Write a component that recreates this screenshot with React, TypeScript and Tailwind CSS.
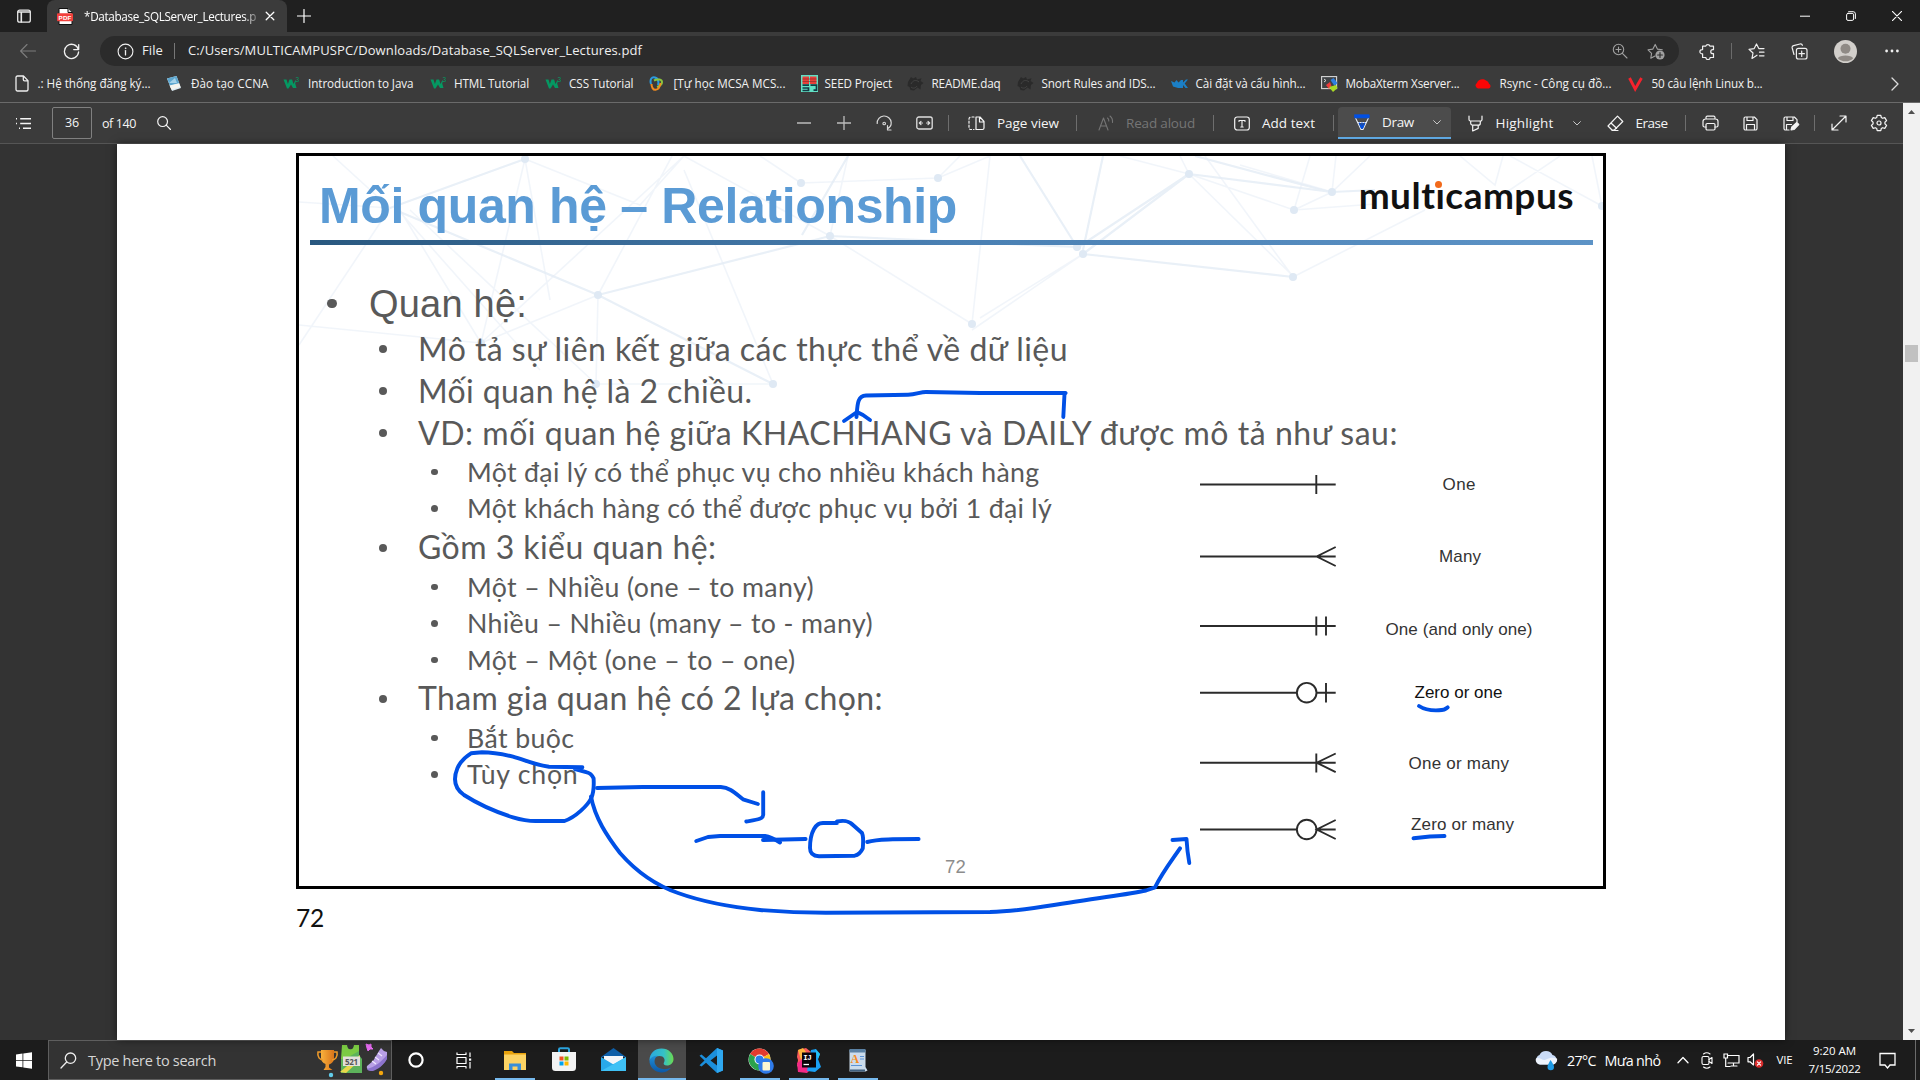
import React, { useLayoutEffect, useRef, useState } from "react";

/** Text whose tracking is adjusted so that it takes up exactly `w` pixels. */
function Fit({ w, children, className = "" }: { w: number; children: string; className?: string }) {
  const ref = useRef<HTMLSpanElement>(null);
  const [spacing, setSpacing] = useState(0);
  useLayoutEffect(() => {
    if (ref.current) {
      const natural = ref.current.getBoundingClientRect().width;
      setSpacing((w - natural) / Array.from(children).length);
    }
  }, []);
  return (
    <span ref={ref} className={"inline-block whitespace-pre " + className} style={{ letterSpacing: spacing }}>
      {children}
    </span>
  );
}

function Svg({ w = 16, h = 16, className = "", children, box }: { w?: number; h?: number; className?: string; children: React.ReactNode; box?: string }) {
  return (
    <svg width={w} height={h} viewBox={box ?? `0 0 ${w} ${h}`} fill="none" stroke="currentColor" strokeWidth="1.1" strokeLinecap="round" strokeLinejoin="round" className={"block shrink-0 " + className}>
      {children}
    </svg>
  );
}

/* ---------- Tab strip ---------- */

function TabStrip() {
  return (
    <div className="flex h-8 items-center bg-[#202020] text-white">
      <Svg className="ml-4 text-[#e8e8e8]">
        <rect x="1.7" y="2.2" width="12.6" height="12" rx="2" strokeWidth="1.3" />
        <path d="M2 4h12M5.3 4v10" strokeWidth="1.6" />
      </Svg>
      <div className="ml-[15px] flex h-8 w-[240px] items-center rounded-t-lg bg-[#3b3b3b]">
        <svg width="17" height="17" viewBox="0 0 17 17" className="ml-[10px] block shrink-0">
          <path d="M2 .5h9l4 4v12H2z" fill="#fff" stroke="#111" />
          <path d="M11 .5v4h4" fill="#ddd" stroke="#111" />
          <rect x="0" y="5.2" width="16" height="8" rx="1" fill="#f2403c" />
          <text x="1.6" y="11.6" fontSize="6.2" fontWeight="700" fontFamily="Liberation Sans, sans-serif" fill="#fff" textLength="12.8">PDF</text>
        </svg>
        <div className="ml-[10px] w-[173px] text-[11.7px] leading-5 [mask-image:linear-gradient(to_right,black_160px,rgba(0,0,0,0.3)_173px)]">
          <Fit w={172}>*Database_SQLServer_Lectures.p</Fit>
        </div>
        <Svg w={10} h={10} className="ml-[8px]">
          <path d="M1.2 1.2l7.6 7.6M8.8 1.2L1.2 8.8" strokeWidth="1.3" />
        </Svg>
      </div>
      <Svg w={14} h={14} className="ml-[10px]">
        <path d="M7 .5v13M.5 7h13" strokeWidth="1.2" />
      </Svg>
      <div className="ml-auto flex items-center">
        <Svg w={10} h={10}><path d="M0 5.2h10" strokeWidth="1" /></Svg>
        <Svg w={10} h={10} className="ml-9">
          <rect x=".6" y="2.4" width="7" height="7" rx="1.4" strokeWidth="1" />
          <path d="M2.6 .7h4.6a2.2 2.2 0 012.2 2.2v4.6" strokeWidth="1" />
        </Svg>
        <Svg w={10} h={10} className="mr-[18px] ml-9"><path d="M.4 .4l9.2 9.2M9.6 .4L.4 9.6" strokeWidth="1.1" /></Svg>
      </div>
    </div>
  );
}

/* ---------- Address bar ---------- */

function AddressBar() {
  return (
    <div className="flex h-[38px] items-center bg-[#3b3b3b] text-[#f0f0f0]">
      <Svg className="ml-5 text-[#7d7d7d]"><path d="M15.5 8H.8M7 1.5L.6 8 7 14.5" /></Svg>
      <Svg w={17} h={17} className="ml-[27px]">
        <path d="M15.4 6.6A7.1 7.1 0 1015.6 9M15.7 1.6v5h-5" strokeWidth="1.3" />
      </Svg>
      <div className="ml-5 flex h-[30px] w-[1579px] items-center rounded-full bg-[#2b2b2b]">
        <Svg w={17} h={17} className="ml-[17px]">
          <circle cx="8.5" cy="8.5" r="7.4" />
          <path d="M8.5 7.6v4.3" strokeWidth="1.3" />
          <circle cx="8.5" cy="5.2" r=".5" fill="currentColor" strokeWidth=".5" />
        </Svg>
        <div className="ml-2 w-8 text-[13px]"><Fit w={21}>File</Fit></div>
        <div className="h-4 w-px bg-[#777]" />
        <div className="ml-[13px] text-[13px]"><Fit w={454}>C:/Users/MULTICAMPUSPC/Downloads/Database_SQLServer_Lectures.pdf</Fit></div>
        <Svg className="ml-auto text-[#a0a0a0]">
          <circle cx="6.5" cy="6.5" r="5.2" /><path d="M6.5 4v5M4 6.5h5M10.4 10.4l4.6 4.6" />
        </Svg>
        <Svg w={18} h={18} className="mr-[14px] ml-[19px] text-[#a0a0a0]">
          <path d="M8 14l-4.2 2.2.8-4.9L1 7.8l4.9-.7L8.2 2.4l2.2 4.7 4.9.7" />
          <circle cx="13" cy="13" r="4.6" fill="currentColor" stroke="none" />
          <path d="M13 10.6v4.8M10.6 13h4.8" stroke="#2b2b2b" />
        </Svg>
      </div>
      <Svg w={17} h={17} className="ml-5">
        <path d="M5.2 3.2h1.6a2.1 2.1 0 014.1 0h3.6v3.4h-.7a2 2 0 000 4.1h.7v3.8h-3.4a2.1 2.1 0 01-4.2 0H3.6V10.8H3a2.1 2.1 0 010-4.2h.6V3.2z" strokeWidth="1.2" />
      </Svg>
      <div className="ml-[15px] h-4 w-px bg-[#6b6b6b]" />
      <Svg w={17} h={17} className="ml-4">
        <path d="M9 12.2L4 15.4l1-5.4L1 6.3l5.2-.7L8.5 1l2.3 4.6H16M11.5 9.2H16M11.5 12.8H16" strokeWidth="1.2" />
      </Svg>
      <Svg w={17} h={17} className="ml-[26px]">
        <rect x="5.4" y="5.4" width="10.6" height="10.6" rx="2" strokeWidth="1.2" />
        <path d="M10.7 8v5.4M8 10.7h5.4M3 11.5L1.2 5A2 2 0 012.6 2.600L9 1a2 2 0 012.4 1.300" strokeWidth="1.2" />
      </Svg>
      <svg width="23" height="23" viewBox="0 0 23 23" className="ml-[26px] block shrink-0">
        <circle cx="11.500" cy="11.500" r="11.500" fill="#d2cfcb" />
        <circle cx="11.500" cy="8.700" r="5" fill="#8f8a85" />
        <path d="M3.800 18.200c2-3.600 13.400-3.600 15.400 0a11 11 0 01-15.400 0z" fill="#8f8a85" />
      </svg>
      <Svg w={14} h={4} className="ml-[28px]">
        <g fill="currentColor" stroke="none"><circle cx="1.600" cy="2" r="1.400" /><circle cx="7" cy="2" r="1.400" /><circle cx="12.400" cy="2" r="1.400" /></g>
      </Svg>
    </div>
  );
}

/* ---------- Bookmarks ---------- */

const W3 = () => (
  <svg width="17" height="17" viewBox="0 0 17 17" className="block">
    <path d="M.5 4.500h3l1.400 4.500 1.600-4.500h2.600l1.400 4.500 1.700-3.500h1l-1 3 1.300 4.500H10L8 9.500 5.500 13.500H4z" fill="#059862" />
    <text x="12.500" y="6.500" fontSize="6.500" fontFamily="Liberation Sans, sans-serif" fill="#059862">3</text>
  </svg>
);

const Pig = () => (
  <svg width="17" height="17" viewBox="0 0 17 17" className="block">
    <path d="M1 7l3-5 2 1.500L9 2l1 2.500 4.500-1.300-1 2.800 3 2-2.600 2-.4 4.500-3-2-3.500 3-3.500-.5L2.500 12l-2-1z" fill="#2a2a2a" />
    <path d="M4 9c2-4 5-4.500 8-2M4 12c2 2 5 1 6-1" fill="none" stroke="#444" />
  </svg>
);

const bookmarks: { label: string; w: number; box: string; icon: React.ReactNode; pad: string }[] = [
  {
    label: ".: Hệ thống đăng ký...", w: 113, box: "w-[151.5px]", pad: "w-[22px]",
    icon: <Svg w={14} h={17} className="text-[#eee]"><path d="M1 2.500A1.500 1.500 0 012.500 1H8.500l4.500 4.600v9A1.500 1.500 0 0111.500 16h-9A1.500 1.500 0 011 14.500zM8.300 1v3.500a1.300 1.300 0 001.300 1.300H13" strokeWidth="1.300" /></Svg>,
  },
  {
    label: "Đào tạo CCNA", w: 77.500, box: "w-[117px]", pad: "w-[24px]",
    icon: (
      <svg width="16" height="17" viewBox="0 0 16 17" className="block">
        <path d="M1 3.500l9.500-2.500L15 13l-9 3z" fill="#dcebf3" /><path d="M1 3.500l9.500-2.500 2.800 7.500-9.300 2.300z" fill="#5ea7cf" /><path d="M3.500 10.500l9.500-2.300 1.500 3.500-9 3z" fill="#f4f4ee" /><path d="M3 8l6-5 2 5z" fill="#a5d3ea" />
      </svg>
    ),
  },
  { label: "Introduction to Java", w: 105.500, box: "w-[147px]", pad: "w-[24px]", icon: <W3 /> },
  { label: "HTML Tutorial", w: 75, box: "w-[114.5px]", pad: "w-[23px]", icon: <W3 /> },
  { label: "CSS Tutorial", w: 64.500, box: "w-[104px]", pad: "w-[23.5px]", icon: <W3 /> },
  {
    label: "[Tự học MCSA MCS...", w: 112, box: "w-[152px]", pad: "w-[24px]",
    icon: (
      <svg width="15" height="17" viewBox="0 0 15 17" className="block" fill="none" strokeWidth="2">
        <path d="M2 9C.500 4 3 1.500 6 2.500s4 4 3 7.500" stroke="#2a9be0" /><path d="M5 5.500c4-2 8-1 8 1.500s-2 4-5 5" stroke="#8ac53e" /><path d="M2.500 9c0 3 1.500 6 4 5.800S11 12 11.500 8" stroke="#f28b1f" />
      </svg>
    ),
  },
  {
    label: "SEED Project", w: 67.500, box: "w-[106px]", pad: "w-[23px]",
    icon: (
      <svg width="17" height="17" viewBox="0 0 17 17" className="block">
        <rect width="17" height="17" fill="#62e0c4" /><path d="M1.500 1.500h6.500v7.500H1.500zM9 1.500h6.500v7.500H9z" fill="#e8403a" /><path d="M1.500 4h14M1.500 6.500h14" stroke="#8d2f2c" strokeWidth=".7" /><path d="M1.500 10.200H8M1.500 13h6v2.500h-6M9.500 10.200h6v5h-3" stroke="#123b44" strokeWidth="1.700" fill="none" />
      </svg>
    ),
  },
  { label: "README.daq", w: 69, box: "w-[110px]", pad: "w-[24px]", icon: <Pig /> },
  { label: "Snort Rules and IDS...", w: 114, box: "w-[154px]", pad: "w-[24px]", icon: <Pig /> },
  {
    label: "Cài đặt và cấu hình...", w: 110, box: "w-[150px]", pad: "w-[24px]",
    icon: (
      <svg width="17" height="17" viewBox="0 0 17 17" className="block">
        <path d="M0 6l3.500 1.500L5.500 5l2 2.500L10 5h2v2.500L15 4.500h2l-3.300 4 3.300 4.500h-2.500L12 10v3H7L2 11.500z" fill="#1b7fc6" />
      </svg>
    ),
  },
  {
    label: "MobaXterm Xserver...", w: 114, box: "w-[154px]", pad: "w-[24px]",
    icon: (
      <svg width="17" height="17" viewBox="0 0 17 17" className="block">
        <rect x=".6" y="1.600" width="15" height="12" fill="#3f4245" stroke="#d8d8d8" strokeWidth="1.100" /><path d="M3 4l2 1.500L3 7" stroke="#ddd" fill="none" /><path d="M5 10l4-3 1.500 4-2.500 3z" fill="#ee3b3b" /><path d="M9.500 5l3-2 4 5-3 3z" fill="#2f7fe0" /><path d="M8 12l7-2 1.500 3-4.500 4z" fill="#a8d826" />
      </svg>
    ),
  },
  {
    label: "Rsync - Công cụ đồ...", w: 112, box: "w-[153px]", pad: "w-[24px]",
    icon: (
      <svg width="17" height="17" viewBox="0 0 17 17" className="block"><path d="M3 13.500a3 3 0 01-1-5.500A5.500 5 0 0111 5.500a4 4 0 013 3.300 2.500 2.500 0 01-.2 4.700z" fill="#fb0505" /></svg>
    ),
  },
  {
    label: "50 câu lệnh Linux b...", w: 111, box: "w-[140px]", pad: "w-[23px]",
    icon: (
      <svg width="16" height="17" viewBox="0 0 16 17" className="block"><path d="M1.500 3l5.700 11L13.500 3" fill="none" stroke="#f5222d" strokeWidth="2.800" /></svg>
    ),
  },
];

function Bookmarks() {
  return (
    <div className="flex h-8 items-center bg-[#3b3b3b] pb-1 pl-[15.5px] text-[11.7px] text-[#f2f2f2]">
      {bookmarks.map((b) => (
        <div key={b.label} className={"flex shrink-0 items-center " + b.box}>
          <div className={"mr-px -ml-px shrink-0 " + b.pad}>{b.icon}</div>
          <Fit w={b.w}>{b.label}</Fit>
        </div>
      ))}
      <Svg w={8} h={14} className="mr-[21px] ml-auto text-[#ddd]"><path d="M1 1l6 6-6 6" strokeWidth="1.300" /></Svg>
    </div>
  );
}

/* ---------- PDF toolbar ---------- */

const Bar = ({ className }: { className: string }) => <div className={"h-4 w-px shrink-0 bg-[#6e6e6e] " + className} />;
const Chevron = ({ className }: { className: string }) => (
  <Svg w={8} h={5} className={"text-[#c8c8c8] " + className}><path d="M.6 .6L4 4 7.400 .6" strokeWidth="1" /></Svg>
);

function PdfToolbar() {
  return (
    <div className="flex h-10 w-[1903px] items-center bg-[#3b3b3b] text-[13.5px] text-[#f5f5f5]">
      <Svg w={17} h={13} className="ml-[15px]">
        <path d="M5.200 1.700H16M5.200 6.500H16M8 11.300h8M1 1.700h1M1 6.500h1M4 11.300h1" strokeWidth="1.400" strokeLinecap="butt" />
      </Svg>
      <div className="ml-5 flex h-8 w-10 items-center justify-center rounded-[2px] border border-[#808080] bg-[#3a3a3a]"><Fit w={14} className="text-[12.5px]">36</Fit></div>
      <div className="ml-[10px]"><Fit w={34} className="text-[12.5px]">of 140</Fit></div>
      <Svg w={14} h={14} className="ml-[21px]"><circle cx="5.600" cy="5.600" r="4.900" strokeWidth="1.200" /><path d="M9.200 9.200l4.300 4.300" strokeWidth="1.200" /></Svg>

      <Svg w={14} h={14} className="ml-[626px] text-[#bdbdbd]"><path d="M0 7h14" strokeWidth="1.300" /></Svg>
      <Svg w={14} h={14} className="ml-[26px] text-[#bdbdbd]"><path d="M0 7h14M7 0v14" strokeWidth="1.300" /></Svg>
      <Svg w={17} h={17} className="ml-[25px] text-[#d8d8d8]">
        <path d="M1.200 8.500A7 7 0 0115.200 7.500c.2 3-1.500 5-3.700 6.200M11.500 10.500v4.500h3.500" strokeWidth="1.200" /><circle cx="8.200" cy="8.500" r="1.300" />
      </Svg>
      <Svg w={17} h={14} className="ml-[23px] text-[#e0e0e0]">
        <rect x=".8" y="1" width="15.400" height="12" rx="2" strokeWidth="1.300" /><path d="M6.500 7H3.500m1.500-1.700L3.300 7 5 8.700M10.500 7h3m-1.500-1.700L13.700 7 12 8.700" strokeWidth="1.200" />
      </Svg>
      <Bar className="ml-[15px]" />
      <Svg w={17} h={15} className="ml-[19px]">
        <path d="M8 1v12.500h6.500a1.500 1.500 0 001.500-1.500V5.500L12 1H8zM11.500 1.300V6H16" strokeWidth="1.200" /><path d="M6 1H3a2 2 0 00-2 2v9a1.500 1.500 0 001.500 1.500H6" strokeDasharray="2 2" strokeWidth="1.200" />
      </Svg>
      <div className="ml-3 w-[62px]"><Fit w={62}>Page view</Fit></div>
      <Bar className="ml-[17px]" />
      <Svg w={16} h={16} className="ml-[21px] text-[#757575]">
        <path d="M1 15L5.500 3 10 15M2.600 11h5.800M9.500 3c1 .8 1.400 1.800 1.300 3M12 1c2 1.600 2.800 3.700 2.500 6.500" />
      </Svg>
      <div className="ml-3 w-[69px] text-[#757575]"><Fit w={69}>Read aloud</Fit></div>
      <Bar className="ml-[18px]" />
      <Svg w={16} h={15} className="ml-5">
        <rect x=".7" y="1" width="14.600" height="13" rx="2.500" strokeWidth="1.200" /><path d="M5 5.500V4.500h6v1M8 4.500v6.500M6.800 11h2.400" strokeWidth="1.100" />
      </Svg>
      <div className="ml-3 w-[53px]"><Fit w={53}>Add text</Fit></div>
      <Bar className="ml-[18px]" />
      <div className="ml-1 flex h-8 w-[113px] shrink-0 items-center rounded-t-sm border-b-2 border-[#62aeea] bg-[#4c4c4c]">
        <Svg w={16} h={17} className="ml-4">
          <path d="M1.800 4.500L7 15.500h2l5.200-11M3.500 8.500h9" stroke="#e4eaf5" strokeWidth="1.100" />
          <path d="M.8 .8h14.400v3H.8z" fill="#0050e6" stroke="#0050e6" strokeWidth=".8" />
          <path d="M5.500 9.200l2 5h1l2-5M8 9v5" stroke="#0050e6" strokeWidth="1.300" />
        </Svg>
        <div className="ml-3 w-[31px]"><Fit w={32}>Draw</Fit></div>
        <Chevron className="ml-5" />
      </div>
      <Svg w={15} h={17} className="ml-[17px]">
        <path d="M1 1v3.500a1.500 1.500 0 001.500 1.500h10A1.500 1.500 0 0014 4.500V1M2.700 6v2.200a2 2 0 002 2h5.600a2 2 0 002-2V6M4.700 10.300V16l5.500-2.600v-3" strokeWidth="1.200" />
      </Svg>
      <div className="ml-[12.500px] w-[57px]"><Fit w={58}>Highlight</Fit></div>
      <Chevron className="ml-5" />
      <Svg w={17} h={17} className="ml-[26px]">
        <path d="M10.500 1.200l5.300 5.300-8.500 8.500H5L1 11l9.500-9.800zM4 8l5.600 5.300M5 15.500h6" strokeWidth="1.200" />
      </Svg>
      <div className="ml-3 w-8"><Fit w={32}>Erase</Fit></div>
      <Bar className="ml-[17px]" />
      <Svg w={17} h={16} className="ml-4">
        <path d="M4 4V2.500A1.200 1.200 0 015.200 1.200h6.600A1.200 1.200 0 0113 2.500V4M4 12H2.500A1.500 1.500 0 011 10.500v-4A2.500 2.500 0 013.500 4h10A2.500 2.500 0 0116 6.500v4a1.500 1.500 0 01-1.500 1.500H13" strokeWidth="1.200" /><rect x="4" y="8.500" width="9" height="6.500" rx="1.200" strokeWidth="1.200" />
      </Svg>
      <Svg w={15} h={15} className="ml-6">
        <path d="M1 2.500A1.500 1.500 0 012.500 1h8.800L14 3.700v8.800a1.500 1.500 0 01-1.500 1.500h-10A1.500 1.500 0 011 12.500zM4 1v3.500h6V1M3.500 14V8.500h8V14" strokeWidth="1.200" />
      </Svg>
      <Svg w={17} h={15} className="ml-[25px]">
        <path d="M6 14H2.500A1.500 1.500 0 011 12.500v-10A1.500 1.500 0 012.500 1h8.800L14 3.700v2M4 1v3.500h6V1M3.500 14V8.500h5" strokeWidth="1.200" />
        <path d="M8 14l.8-3 5-4.500 2 2-4.800 5z" fill="currentColor" />
      </Svg>
      <Bar className="ml-[14px]" />
      <Svg w={16} h={16} className="ml-4"><path d="M1.500 14.500l13-13M9 1h6v6M1 9v6h6" strokeWidth="1.200" /></Svg>
      <Svg w={18} h={18} className="ml-[23px]">
        <path d="M7.200 1.300h3.600l.5 2.200 1.300.8 2.200-.7 1.800 3-1.700 1.600v1.600l1.700 1.600-1.800 3-2.200-.7-1.300.8-.5 2.200H7.200l-.5-2.200-1.300-.8-2.200.7-1.800-3 1.700-1.600V8.200L1.400 6.600l1.800-3 2.200.7 1.300-.8z" strokeWidth="1.200" /><circle cx="9" cy="9" r="2" strokeWidth="1.200" />
      </Svg>
    </div>
  );
}

/* ---------- Slide ---------- */

const meshNodes: [number, number][] = [
  [525, 159], [598, 295], [830, 236], [801, 183], [938, 178], [972, 324], [773, 384], [481, 343], [596, 384],
  [1189, 174], [1332, 192], [1294, 210], [1083, 254], [1077, 247], [1293, 277], [1602, 206],
];

function Mesh() {
  return (
    <svg width="1304" height="244" viewBox="299 156 1304 244" className="absolute top-0 left-0">
      <g stroke="#e2ebf5" strokeWidth="2.200" opacity=".75" fill="none">
        <path d="M525 159L390 208M598 295L830 236 1077 247M1083 254L1293 277M1189 174L1332 192 1375 190M1189 174L1083 254" />
        <path d="M598 295L773 384M1020 156L1077 247M1103 156L1083 250M1189 174L1080 246M400 212L598 295M1330 192L1195 156M802 235L848 156" />
      </g>
      <g stroke="#e6edf5" strokeWidth="1.600" opacity=".55" fill="none">
        <path d="M390 208L333 156M390 208L299 202M390 208L299 345M400 210L481 343M410 210L596 384M400 212L540 370M481 343L299 325M481 343L598 295M481 343L684 156M596 384L598 295M598 295L672 156M830 236L684 156M773 384L684 170M773 384L596 384M525 159L640 205 684 156M525 159L550 300M525 159L481 343M801 183L938 178 990 156M938 178L960 156M801 183L760 156M830 236L848 156M830 236L972 324M990 156L972 324M1083 254L972 330M1083 254L980 318M1189 174L1294 277M1205 156L1293 277M1189 174L1294 210M1294 210L1332 192 1370 156M1294 210L1310 156M1294 210L1375 204M1332 192L1336 156M1293 277L1425 210M1460 156L1495 185 1503 156M1495 200L1560 156M1510 156L1602 206M1592 156L1602 206M1189 174L1180 156M1189 174L1120 156M1240 165L1332 192" />
      </g>
      <g fill="#dfe9f4">
        {meshNodes.map(([x, y], i) => <circle key={i} cx={x} cy={y} r="4" />)}
      </g>
    </svg>
  );
}

const lines: { level: 2 | 3; text: string; w: number }[] = [
  { level: 2, text: "Mô tả sự liên kết giữa các thực thể về dữ liệu", w: 650 },
  { level: 2, text: "Mối quan hệ là 2 chiều.", w: 334.500 },
  { level: 2, text: "VD: mối quan hệ giữa KHACHHANG và DAILY được mô tả như sau:", w: 980 },
  { level: 3, text: "Một đại lý có thể phục vụ cho nhiều khách hàng", w: 572.500 },
  { level: 3, text: "Một khách hàng có thể được phục vụ bởi 1 đại lý", w: 585 },
  { level: 2, text: "Gồm 3 kiểu quan hệ:", w: 298.500 },
  { level: 3, text: "Một – Nhiều (one – to many)", w: 347 },
  { level: 3, text: "Nhiều – Nhiều (many – to - many)", w: 406 },
  { level: 3, text: "Một – Một (one – to – one)", w: 328.500 },
  { level: 2, text: "Tham gia quan hệ có 2 lựa chọn:", w: 465 },
  { level: 3, text: "Bắt buộc", w: 107.500 },
  { level: 3, text: "Tùy chọn", w: 111.500 },
];

function Legend() {
  return (
    <svg width="360" height="380" viewBox="1190 470 360 380" className="absolute top-[314px] left-[891px]">
      <g stroke="#2b2b2b" strokeWidth="1.900" fill="none">
        <path d="M1200 484.500h135.700M1316.300 475v19" />
        <path d="M1200 556.500h135.700M1335.700 547l-19 9.500 19 9.500" />
        <path d="M1200 626h135.700M1316.300 616.500v19M1326 616.500v19" />
        <path d="M1200 692.700h97M1317 692.700h18.700M1326 683v19.500" /><circle cx="1306.700" cy="692.700" r="9.800" />
        <path d="M1200 762.700h135.700M1316.300 753.500v19M1335.700 753.500l-19 9.200 19 9.500" />
        <path d="M1200 829.500h97M1317 829.500h18.700M1335.700 820l-19 9.500 19 9.500" /><circle cx="1306.700" cy="829.500" r="9.800" />
      </g>
      <g fontFamily="Liberation Sans, sans-serif" fontSize="17" fill="#333">
        <text x="1442.500" y="489.500" textLength="33">One</text>
        <text x="1439" y="561.500" textLength="42">Many</text>
        <text x="1385.500" y="634.700" textLength="147">One (and only one)</text>
        <text x="1414.500" y="698" textLength="88" fill="#111">Zero or one</text>
        <text x="1408.500" y="769" textLength="100.500">One or many</text>
        <text x="1411" y="830.300" textLength="103">Zero or many</text>
      </g>
    </svg>
  );
}

function Slide() {
  return (
    <div className="relative mt-[9px] ml-[179px] flex h-[736px] w-[1310px] flex-col border-[3px] border-black bg-white font-['Lato',sans-serif] text-[#595959]">
      <Mesh />
      <div className="relative flex h-[84px] items-start justify-between pt-5 pr-[29px] pl-5">
        <h1 className="font-['Liberation_Sans',sans-serif] text-[50px] leading-[60px] font-bold text-[#5b9bd5]"><Fit w={638}>Mối quan hệ – Relationship</Fit></h1>
        <div className="relative mt-[1px] text-[37px] leading-[36px] font-bold text-[#111]">
          <Fit w={216}>multicampus</Fit>
          <div className="absolute top-[3px] left-[76px] h-2 w-[9px] bg-white" />
          <div className="absolute top-[4px] left-[76px] size-[7px] rounded-full bg-[#f26a1b]" />
        </div>
      </div>
      <div className="relative ml-[10.500px] h-[5px] w-[1283px] bg-linear-to-r from-[#29587f] via-[#4a80b3] to-[#5d93c6]" />
      <div className="relative mt-[34px] flex h-[49px] items-center pl-[28px]">
        <div className="size-[9.500px] rounded-full bg-[#595959]" />
        <div className="ml-[32.500px] pt-px font-['Liberation_Sans',sans-serif] text-[38px] leading-[49px]"><Fit w={158}>Quan hệ:</Fit></div>
      </div>
      <div className="relative">
        {lines.map((l) =>
          l.level === 2 ? (
            <div key={l.text} className="flex h-[42px] items-center pl-[80px] text-[32px] leading-[42px]">
              <div className="size-[7.700px] rounded-full bg-[#595959]" />
              <div className="-mt-px ml-[31.300px]"><Fit w={l.w}>{l.text}</Fit></div>
            </div>
          ) : (
            <div key={l.text} className="flex h-[36.400px] items-center pl-[132px] text-[26.700px] leading-[36.400px]">
              <div className="size-[6.500px] rounded-full bg-[#595959]" />
              <div className="ml-[29.500px]"><Fit w={l.w}>{l.text}</Fit></div>
            </div>
          )
        )}
      </div>
      <div className="mt-auto mb-[7px] pl-[9px] text-center font-['Liberation_Sans',sans-serif] text-[18.500px] leading-6 text-[#8c8c8c]"><Fit w={21}>72</Fit></div>
      <Legend />
    </div>
  );
}

/* Pen strokes laid over the page. */
function Ink() {
  return (
    <svg width="1668" height="896" viewBox="117 144 1668 896" className="absolute top-0 left-0" fill="none" stroke="#0050e6" strokeWidth="3.900" strokeLinecap="round" strokeLinejoin="round">
      <path d="M1063.300 417L1064.500 394 1065.500 393H980L926 392C920 392 916 394.700 908 394.700L866 395.500C857 396 857.500 405 856.500 417" />
      <path d="M844 421L857 412 863 415 870 420" />
      <path d="M582.400 767.300L549 766.700C535 765 525 760 513 756.700 502 754 492 752.300 482 752.300L471 753.300C465 757 460 762 457.400 768.300 453 779 454 788 464 795 478 804 496 812 513 817.300 522 820 530 821 535.500 821H564.500C576 817 588 805 591.300 798 594 792 594 785 593.600 778.300 592 775 590 773 587 772.300L575 769" />
      <path d="M597 788L642.700 787H720.800C730 787.500 735 793 743 799.300L757.900 804" />
      <path d="M763.200 792.300V815C763 819 758 819.500 746.300 821.500" />
      <path d="M696.300 841L708 837 720 836H765C771 837 776 840 780 842.500" />
      <path d="M763 840L805.600 839" />
      <path d="M837 821.500C845 820 849 821 853 825L862 833C864 838 863 843 862.800 848.300 861 852 858 855 854.700 855.700L819 856.300C813 856 810 853 810 848 810 842 810 836 814 829 817 824 819 823.300 823 823H837" />
      <path d="M867.200 842C876 839.500 884 839.700 892.700 839.300L918.600 839" />
      <path d="M591 796.700C595 818 607 836 620 853 634 869 652 884 678 893 706 903 730 907 760 910 790 912.500 805 912.700 825.700 912.700L990 912C1025 911 1045 906 1080 901 1105 897 1130 894 1146 890.500L1155 887.300C1162 873 1172 860 1180 848.300" />
      <path d="M1172.500 840L1186.500 839C1187 848 1188 856 1189.300 863" />
      <path d="M1419 706C1425 710 1432 710.700 1439 710.300 1443 710.300 1446 709 1447.700 707.300" />
      <path d="M1413.500 838.200L1430 836.500 1444.500 836" />
    </svg>
  );
}

/* ---------- Taskbar ---------- */

const Running = ({ children, className }: { children: React.ReactNode; className: string }) => (
  <div className={"flex h-10 shrink-0 flex-col items-center justify-end " + className}>
    <div className="flex flex-1 items-center pt-0.5">{children}</div>
    <div className="h-0.5 w-full bg-[#76b9ed]" />
  </div>
);

function Taskbar() {
  return (
    <div className="flex h-10 items-center bg-[#1c1c1c] text-white">
      <svg width="16" height="17" viewBox="0 0 16 17" fill="#fff" className="ml-4 block shrink-0"><path d="M0 2.500l6.500-.9V8H0zM7.300 1.500L16 .2V8H7.300zM0 8.800h6.500v6.500L0 14.400zM7.300 8.800H16v8l-8.700-1.300z" /></svg>
      <div className="ml-4 flex h-10 w-[344px] shrink-0 items-center border border-[#5e5e5e] bg-[#333]">
        <Svg w={17} h={17} className="ml-[11px] text-[#eee]"><circle cx="10.500" cy="6.200" r="5.200" strokeWidth="1.300" /><path d="M6.700 10L1 16" strokeWidth="1.300" /></Svg>
        <div className="mt-px ml-[11px] w-[128px] text-[14.500px] text-[#d6d6d6]"><Fit w={128}>Type here to search</Fit></div>
        <svg width="74" height="36" viewBox="316 1042 74 36" className="ml-[99px] block shrink-0">
          <defs>
            <linearGradient id="cup" x1="0" x2="1"><stop stopColor="#f9b13c" /><stop offset="1" stopColor="#d9741a" /></linearGradient>
          </defs>
          <path d="M322 1050h13v8c0 4-3 6-5 6.500v3l3.500 2.500h-9l2-3v-3c-3-1-4.500-4-4.500-6z" fill="url(#cup)" />
          <path d="M322 1052h-3c-1 5 2 8 5 8M335 1052h3c1 5-2 8-5 8" fill="none" stroke="#ee9a2a" strokeWidth="1.600" />
          <path d="M343 1045h5c0 6 7 6 7 0h5v10l3 4v14h-21v-14l2-4z" fill="#5db25b" /><path d="M343 1045h5c0 6 7 6 7 0h5v6l-14 8h-4z" fill="#7ccb43" />
          <path d="M341 1072l20-17v5l-14 13z" fill="#e8d84a" />
          <rect x="344" y="1056.500" width="17" height="9.500" fill="#e3e0da" /><text x="346" y="1064.500" fontSize="8" fontWeight="700" fontFamily="Open Sans, sans-serif" fill="#555" textLength="13">521</text>
          <path d="M368 1066l6-5 6-10 2-3 3 3 3 1v6c-3 7-9 10-14 12-4 1-7-1-6-4z" fill="#b9a0e6" /><path d="M368 1069c8-2 14-7 20-14v4c-4 7-9 10-14 12-3 0-5 0-6-2z" fill="#8d74cd" /><path d="M373 1061l4 3M376 1057l4 3M379 1053l4 3" stroke="#efe6ff" strokeWidth="1.200" />
          <path d="M367 1044l3 1 2-1 0 3 2 2-3 0-2 2-1-3z" fill="#e56bf0" stroke="#e56bf0" />
          <circle cx="332" cy="1075" r="2.200" fill="#62cdeb" /><circle cx="382" cy="1073" r="2.200" fill="#f5a70e" />
        </svg>
      </div>
      <Svg w={16} h={16} className="ml-4"><circle cx="8" cy="8" r="6.600" strokeWidth="2.200" /></Svg>
      <Svg w={16} h={17} className="ml-[31.500px]">
        <path d="M1 .5v2h9v-2M1 16.500v-2h9v2M1 5.500h9v6H1zM14 .5v4.500M14 10v6.500" strokeWidth="1.200" strokeLinecap="butt" /><rect x="13" y="6.500" width="2.200" height="2.200" fill="#fff" stroke="none" />
      </Svg>
      <Running className="ml-[23.500px] w-10">
        <svg width="22" height="19" viewBox="0 0 22 19" className="block"><path d="M0 0h8l2 2h12v16H0z" fill="#e8a20c" /><path d="M0 3.500h22V19H0z" fill="#fcd364" /><path d="M5 19v-6.500h12V19h-3.500v-3.500h-5V19z" fill="#3a8fd8" /></svg>
      </Running>
      <svg width="24" height="26" viewBox="0 0 24 26" className="ml-[17px] block shrink-0">
        <path d="M7 5V2.500A1.300 1.300 0 018.300 1.200h7.400A1.300 1.300 0 0117 2.500V5" fill="none" stroke="#2ba5e0" strokeWidth="2" /><path d="M0 5h24v15.500a3.500 3.500 0 01-3.500 3.500h-17A3.500 3.500 0 010 20.500z" fill="#f3f3f3" />
        <path d="M7.500 9.500h4v4h-4z" fill="#f25022" /><path d="M12.500 9.500h4v4h-4z" fill="#7fba00" /><path d="M7.500 14.500h4v4h-4z" fill="#00a4ef" /><path d="M12.500 14.500h4v4h-4z" fill="#ffb900" />
      </svg>
      <svg width="25" height="24" viewBox="0 0 25 24" className="ml-[25px] block shrink-0">
        <path d="M0 9L12.500 0 25 9z" fill="#0f5fa8" /><path d="M3 8h19v8H3z" fill="#f4f6f9" /><path d="M0 9l12.500 7.500L25 9v14H0z" fill="#29a9ea" /><path d="M0 23L25 9v14z" fill="#3fc1f5" />
      </svg>
      <Running className="ml-[11.500px] w-12 bg-[#4a4a4a]">
        <svg width="25" height="25" viewBox="0 0 25 25" className="block">
          <defs>
            <linearGradient id="eg" x1="0" x2="1"><stop stopColor="#2aa7e0" /><stop offset=".6" stopColor="#35c1c6" /><stop offset="1" stopColor="#6bdb4f" /></linearGradient>
            <linearGradient id="eb" x1="0" y1="0" x2="0" y2="1"><stop stopColor="#1f8fd8" /><stop offset="1" stopColor="#0c56a4" /></linearGradient>
          </defs>
          <path d="M.5 12.500C.5 5 6 .5 12.500.5 19.500.5 24.500 5.500 24.500 11c0 4-3 6.500-6.500 6.500-3 0-4-1.500-3-3 1.500-3 0-6.500-4.500-6.500-5 0-9 3-10 4.500z" fill="url(#eg)" />
          <path d="M.5 12.500C1.500 9.500 5 7.500 9 7.800c-4 2-4 6.200-2.500 9 2.500 4.500 9.500 5.500 15.500 3-3 3.700-7 5-10 4.700C5 24 .3 18.500.5 12.500z" fill="url(#eb)" />
        </svg>
      </Running>
      <svg width="25" height="25" viewBox="0 0 25 25" className="ml-[13px] block shrink-0">
        <path d="M18 0l6 2.500v20L18 25 7 14.800 2.500 18.500.5 17.300 5.500 12.500.5 7.700l2-1.200L7 10.200z" fill="#1b8fdc" /><path d="M18 7.500v10l-6.500-5z" fill="#1c1c1c" /><path d="M18 0l6 2.500v20L18 25z" fill="#2fa8f0" />
      </svg>
      <Running className="ml-4 w-10">
        <svg width="26" height="26" viewBox="0 0 26 26" className="mt-px ml-0.5 block">
          <circle cx="11.500" cy="11.500" r="11" fill="#fff" /><path d="M11.500 11.500L2 6A11 11 0 0121 6z" fill="#e33b2e" /><path d="M11.500 11.500L21 6c2.500 4 2 13-6 16.500z" fill="#fbc116" /><path d="M11.500 11.500L2 6c-4 8 2 16 9 16.500z" fill="#2ba24c" /><circle cx="11.500" cy="11.500" r="5" fill="#fff" /><circle cx="11.500" cy="11.500" r="4" fill="#2b7de9" />
          <circle cx="18" cy="18" r="7.800" fill="#2f7bea" /><rect x="14.500" y="14" width="7.500" height="8.500" rx="1" fill="#fdf7d2" />
        </svg>
      </Running>
      <Running className="ml-[9px] w-10">
        <svg width="24" height="25" viewBox="0 0 24 25" className="block">
          <path d="M1 2l8-2 5 4-8 18-6-4 1-6-1-3z" fill="#fb5a5a" /><path d="M1 2l5-2 3 4-5 8z" fill="#fdb53c" /><path d="M0 15l6-4 8 10-4 4-9-1z" fill="#f22a86" /><path d="M14 2l5-1 4 5-2 5 3 8-6 5-8-1z" fill="#1aa0f5" /><path d="M18 1l5 5-2 5z" fill="#22c3f3" />
          <rect x="5" y="4.500" width="14" height="15" fill="#0b0508" /><text x="6.200" y="11.500" fontSize="7.500" fontWeight="700" fontFamily="Liberation Mono, monospace" fill="#fff" textLength="8.500">IJ</text><path d="M6.500 16.500h5.500" stroke="#fff" strokeWidth="1.300" />
        </svg>
      </Running>
      <Running className="ml-[9px] w-10">
        <svg width="20" height="23" viewBox="0 0 20 23" className="block">
          <path d="M1.500 1h16v17l2 3.500-2 1H1.500z" fill="#cbdcec" /><path d="M1.500 0h16v3.500h-16z" fill="#5b82a5" /><path d="M2 20.500h15v2H2z" fill="#40617f" /><text x="2.500" y="13.500" fontSize="12" fontWeight="700" fontFamily="Liberation Serif, serif" fill="#f58a1f">A</text><path d="M12 7.500h4M12 10h4M3 16.500h11" stroke="#5c93d6" strokeWidth="1.200" />
        </svg>
      </Running>

      <div className="ml-auto flex h-10 w-[385px] shrink-0 items-center text-[14.300px]">
        <svg width="23" height="21" viewBox="0 0 23 21" className="block shrink-0"><path d="M5 14.500a5 5 0 01-.5-9.500A7 6.500 0 0117.500 5a5 5 0 011 9.500z" fill="#c9dbf7" /><path d="M5 14.500a4.500 4.500 0 01-4-6c4-2 7 3 10 1 4-2 7-2 11-1a5 5 0 01-4 6z" fill="#eef4fd" /><path d="M15.500 10c2 3 3.500 5 3.500 7a3.200 3.200 0 01-6.500 0c0-2 1.500-4 3-7z" fill="#1e9be6" /></svg>
        <div className="mt-px ml-[9px] w-[29px]"><Fit w={29}>27°C</Fit></div>
        <div className="mt-px ml-[8.500px] w-[56px]"><Fit w={56}>Mưa nhỏ</Fit></div>
        <Svg w={12} h={8} className="ml-[16px]"><path d="M1 6.800L6 1.500l5 5.300" strokeWidth="1.300" /></Svg>
        <Svg w={12} h={17} className="ml-3"><rect x="1" y="4.500" width="7" height="8" rx="1.500" /><path d="M8 7.500l3-2v6l-3-2M2.500 2c2-1.500 4.500-1.500 6.500 0M2.500 15c2 1.500 4.500 1.500 6.500 0" /></Svg>
        <Svg w={17} h={15} className="ml-[10px]"><path d="M5 2.500h11v7.500H5M8 13h6M10.500 10v3M1 1h3.500v4H1zM2.700 5v8.500H7" strokeWidth="1.200" strokeLinejoin="miter" /></Svg>
        <Svg w={17} h={16} className="ml-[7px]"><path d="M1 5.500h2L6.500 2v11L3 9.800H1z" strokeWidth="1.200" /><circle cx="12" cy="11.500" r="4.300" fill="#d92b2b" stroke="none" /><path d="M10.400 9.900l3.200 3.200M13.600 9.900l-3.200 3.200" stroke="#fff" strokeWidth="1.200" /></Svg>
        <div className="ml-[13px] w-[16px] text-[11.500px]"><Fit w={16}>VIE</Fit></div>
        <div className="ml-4 flex w-[52px] flex-col items-center text-[11.500px] leading-[18px]"><Fit w={43}>9:20 AM</Fit><Fit w={52}>7/15/2022</Fit></div>
        <Svg w={17} h={17} className="ml-[18px]"><path d="M1 1.500h15v11.500h-5l-2.500 3-2.500-3H1z" strokeWidth="1.300" strokeLinejoin="miter" /></Svg>
        <div className="mr-1 ml-auto h-10 w-px bg-[#6b6b6b]" />
      </div>
    </div>
  );
}

export default function App() {
  return (
    <div className="flex h-[1080px] w-[1920px] flex-col overflow-hidden bg-[#333] font-['Open_Sans',sans-serif]">
      <TabStrip />
      <AddressBar />
      <Bookmarks />
      <div className="h-px bg-[#6a6a6a]" />
      <div className="flex h-[937px]">
        <div className="flex w-[1903px] flex-col">
          <PdfToolbar />
          <div className="h-px bg-[#555]" />
          <div className="relative ml-[117px] h-[896px] w-[1668px] bg-white shadow-[0_0_8px_rgba(0,0,0,0.5)]">
            <div className="h-[9px]" />
            <div className="-mt-[9px] flex flex-col">
              <Slide />
              <div className="mt-[14px] ml-[179px] font-['Lato',sans-serif] text-[24.500px] leading-[30px] text-[#111]"><Fit w={28}>72</Fit></div>
            </div>
            <Ink />
          </div>
        </div>
        <div className="flex w-[17px] flex-col items-center bg-[#f1f1f1]">
          <svg width="7" height="4" viewBox="0 0 7 4" fill="#505050" className="mt-[7px] block"><path d="M0 4L3.500 0 7 4z" /></svg>
          <div className="mt-[231px] h-[17px] w-[13px] bg-[#c1c1c1]" />
          <svg width="7" height="4" viewBox="0 0 7 4" fill="#505050" className="mt-auto mb-[7px] block"><path d="M0 0l3.500 4L7 0z" /></svg>
        </div>
      </div>
      <Taskbar />
    </div>
  );
}
